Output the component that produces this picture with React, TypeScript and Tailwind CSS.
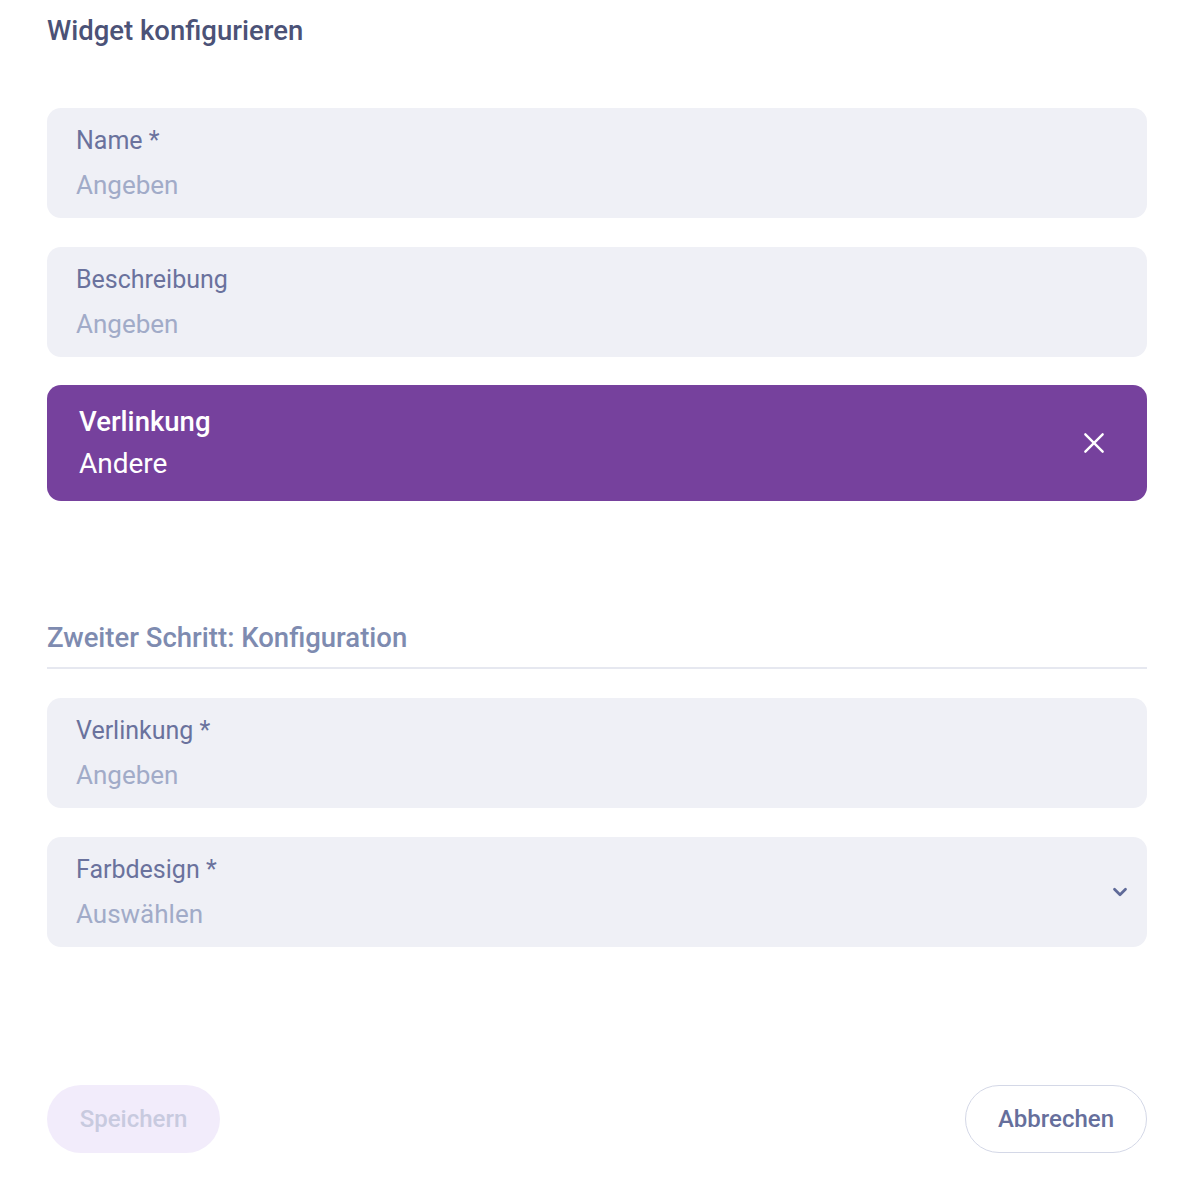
import React from "react";

function Field({ label, value, chevron }: { label: string; value: string; chevron?: boolean }) {
  return (
    <div className="flex h-[110px] items-center rounded-[14px] bg-[#eff0f6] pl-[29px] pr-[16px]">
      <div className="flex flex-1 flex-col">
        <span className="text-[25px] leading-[30px] text-[#6a729d]">{label}</span>
        <span className="mt-[14px] text-[26px] leading-[30px] text-[#a1abc8]">{value}</span>
      </div>
      {chevron && (
        <svg width="22" height="22" viewBox="0 0 24 24" fill="none" stroke="#5f6a98" strokeWidth="3" strokeLinecap="round" strokeLinejoin="round">
          <path d="M6 9l6 6 6-6" />
        </svg>
      )}
    </div>
  );
}

export default function App() {
  return (
    <div className="min-h-[1192px] w-full bg-white pl-[47px] pr-[39px] pt-[13px]" style={{ fontFamily: "Roboto, 'Liberation Sans', sans-serif" }}>
      <h1 className="text-[27.5px] font-medium leading-[36px] text-[#4b5277]">Widget konfigurieren</h1>
      <div className="mt-[59px] flex flex-col gap-[29px]">
        <Field label="Name *" value="Angeben" />
        <Field label="Beschreibung" value="Angeben" />
        <div className="-mt-px flex h-[116px] items-center rounded-[14px] bg-[#76419d] pl-[32px] pr-[40px]">
          <div className="flex flex-1 flex-col">
            <span className="text-[27.5px] font-medium leading-[32px] text-white">Verlinkung</span>
            <span className="mt-[10px] text-[28px] leading-[32px] text-white">Andere</span>
          </div>
          <svg width="26" height="26" viewBox="0 0 24 24" fill="none" stroke="white" strokeWidth="2.2" strokeLinecap="round">
            <path d="M4 4l16 16M20 4L4 20" />
          </svg>
        </div>
      </div>
      <div className="mt-[120px] border-b-2 border-[#e6e8f0] pb-[12px]">
        <h2 className="text-[27.5px] font-medium leading-[34px] text-[#7e8bb0]">Zweiter Schritt: Konfiguration</h2>
      </div>
      <div className="mt-[29px] flex flex-col gap-[29px]">
        <Field label="Verlinkung *" value="Angeben" />
        <Field label="Farbdesign *" value="Auswählen" chevron />
      </div>
      <div className="mt-[138px] flex items-center justify-between">
        <button className="h-[68px] w-[173px] rounded-full bg-[#f2ecfb] text-[24px] font-medium text-[#c8cadf]">Speichern</button>
        <button className="h-[68px] w-[182px] rounded-full border border-[#d4d8e7] bg-white text-[24px] font-medium text-[#666f9c]">Abbrechen</button>
      </div>
    </div>
  );
}
